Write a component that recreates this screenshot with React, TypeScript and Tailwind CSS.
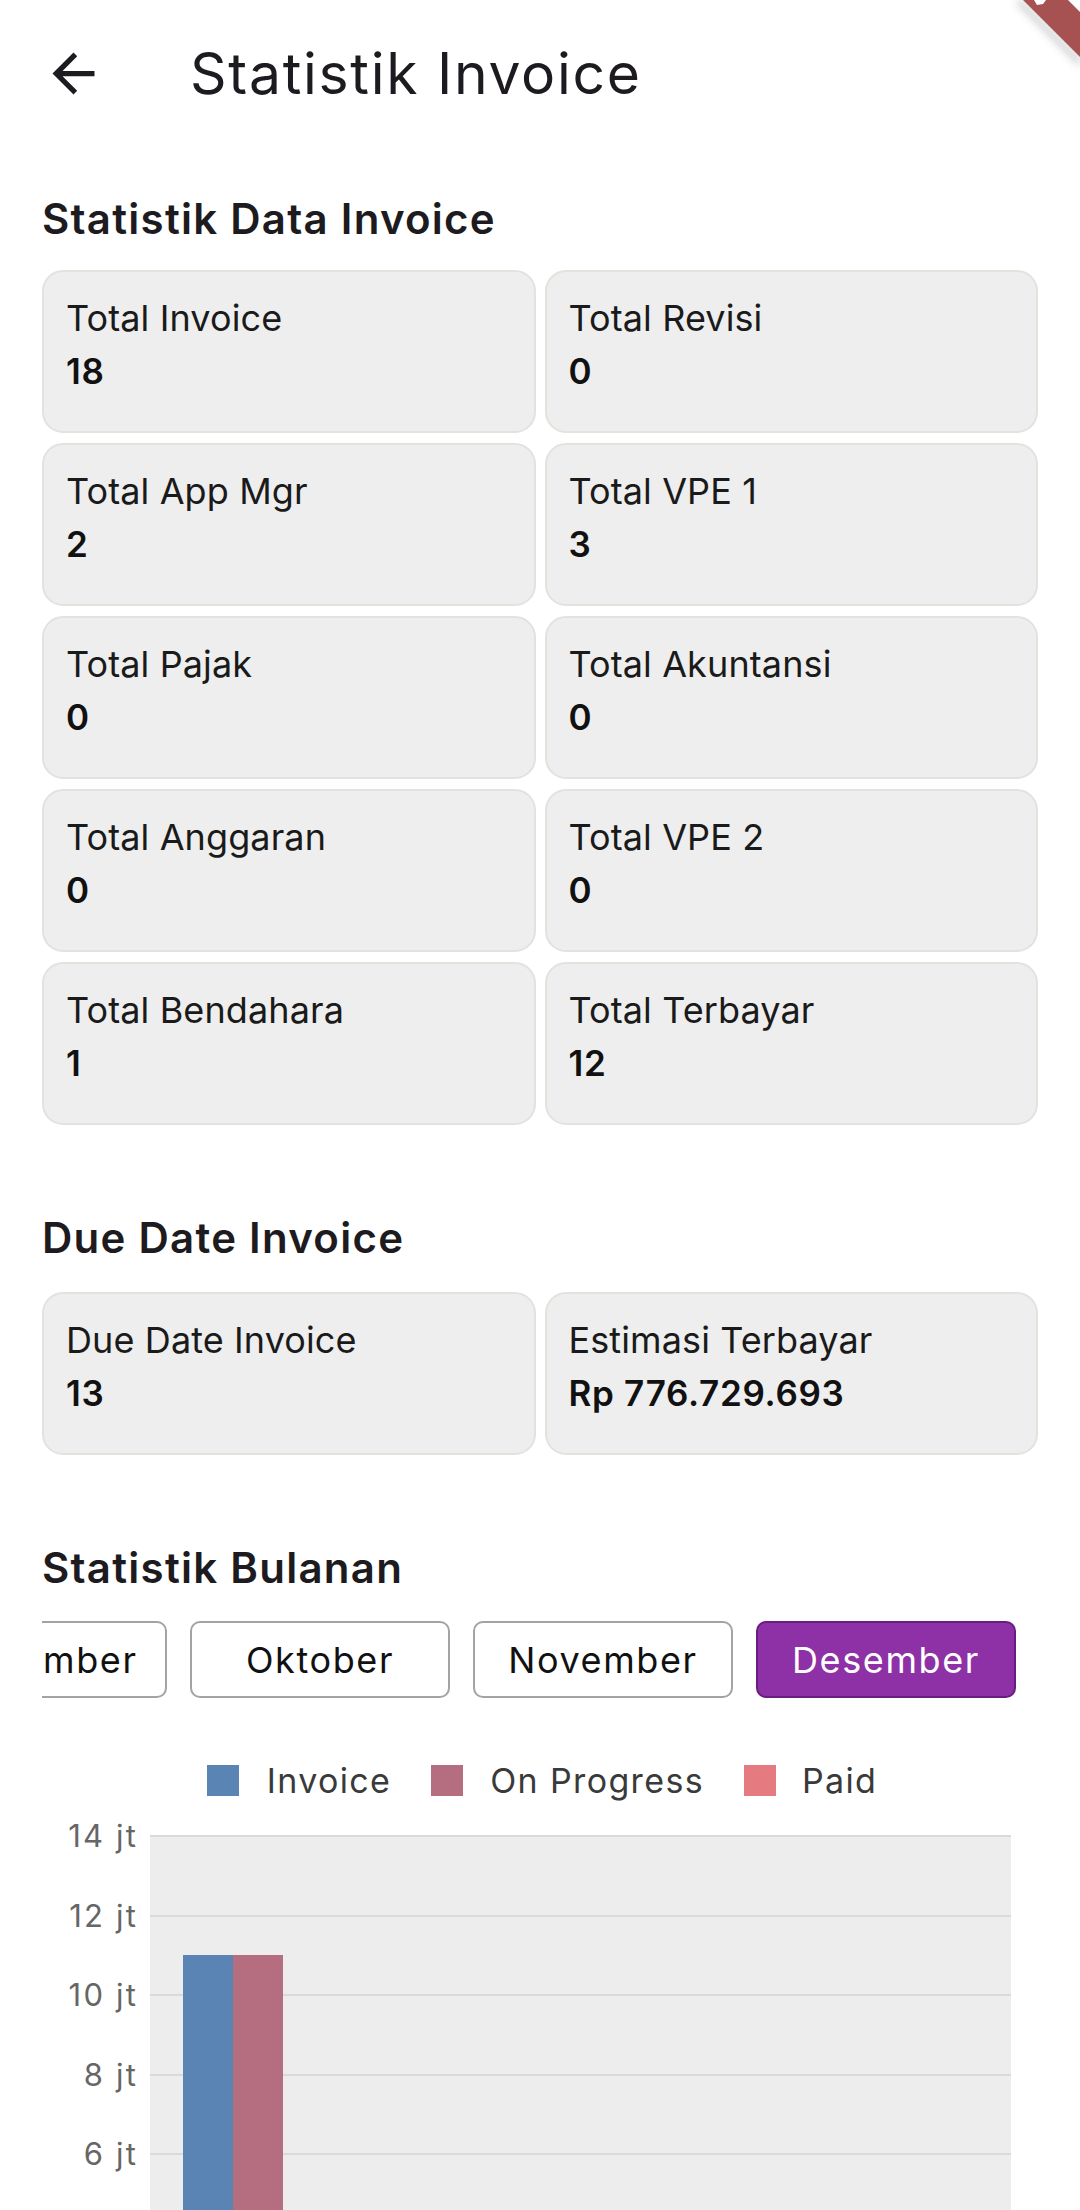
import React from "react";

const stats: [string, string][] = [
  ["Total Invoice", "18"],
  ["Total Revisi", "0"],
  ["Total App Mgr", "2"],
  ["Total VPE 1", "3"],
  ["Total Pajak", "0"],
  ["Total Akuntansi", "0"],
  ["Total Anggaran", "0"],
  ["Total VPE 2", "0"],
  ["Total Bendahara", "1"],
  ["Total Terbayar", "12"],
];

const months = ["September", "Oktober", "November", "Desember"];

function Card({ label, value }: { label: string; value: string }) {
  return (
    <div className="h-[163px] rounded-[21px] border-2 border-[#dfe4dd] bg-[#eeeeee] pl-[22px] pt-[24px]">
      <div className="text-[36px] leading-[44px] tracking-[0.003em] text-[#1a1a1a]">{label}</div>
      <div className="mt-[9px] text-[35px] font-semibold leading-[44px] tracking-[0.02em] text-[#111111]">{value}</div>
    </div>
  );
}

function Heading({ children, className = "" }: { children: React.ReactNode; className?: string }) {
  return (
    <div className={"text-[42px] font-semibold leading-[50px] tracking-[0.03em] text-[#1d1b20] " + className}>
      {children}
    </div>
  );
}

const ticks = ["14 jt", "12 jt", "10 jt", "8 jt", "6 jt"];

export default function App() {
  return (
    <div className="relative h-[2210px] w-[1080px] overflow-hidden bg-white font-['Inter',sans-serif]">
      {/* Debug banner */}
      <svg className="absolute right-0 top-0" width="80" height="80" viewBox="0 0 80 80">
        <defs>
          <filter id="sh" x="-50%" y="-50%" width="200%" height="200%">
            <feGaussianBlur stdDeviation="4" />
          </filter>
        </defs>
        <polygon points="21,0 80,59 80,66 16,2" fill="rgba(0,0,0,0.25)" filter="url(#sh)" />
        <polygon points="23,0 68,0 80,12 80,57" fill="#a65252" />
        <polygon points="34,0 46,0 43,4 37,5" fill="#ffffff" />
      </svg>

      {/* App bar */}
      <div className="flex h-[147px] items-center">
        <div className="flex h-[147px] w-[147px] items-center justify-center">
          <svg width="63" height="63" viewBox="0 0 24 24">
            <path d="M20 11H7.83l5.59-5.59L12 4l-8 8 8 8 1.41-1.41L7.83 13H20v-2z" fill="#1d1b20" />
          </svg>
        </div>
        <div className="pl-[43px] text-[57px] font-normal leading-[70px] tracking-[0.03em] text-[#1d1b20]">
          Statistik Invoice
        </div>
      </div>

      <div className="px-[42px]">
        <Heading className="mt-[47px]">Statistik Data Invoice</Heading>
        <div className="mt-[26px] grid grid-cols-2 gap-x-[9px] gap-y-[10px]">
          {stats.map(([l, v]) => (
            <Card key={l} label={l} value={v} />
          ))}
        </div>

        <Heading className="mt-[88px]">Due Date Invoice</Heading>
        <div className="mt-[29px] grid grid-cols-2 gap-x-[9px]">
          <Card label="Due Date Invoice" value="13" />
          <Card label="Estimasi Terbayar" value="Rp 776.729.693" />
        </div>

        <Heading className="mt-[88px]">Statistik Bulanan</Heading>
        <div className="mt-[28px] overflow-hidden">
          <div className="flex justify-end gap-[23px] pr-[22px]">
            {months.map((m) => {
              const active = m === "Desember";
              return (
                <div
                  key={m}
                  className={
                    "flex h-[77px] w-[260px] shrink-0 items-center justify-center rounded-[10px] border-2 text-[36px] tracking-[0.045em] " +
                    (active
                      ? "border-[#6a1d7e] bg-[#8e30a6] text-white"
                      : "border-[#a3a3a3] bg-white text-[#111111]")
                  }
                >
                  {m}
                </div>
              );
            })}
          </div>
        </div>

        {/* Legend */}
        <div className="mt-[60px] flex h-[44px] items-center justify-center text-[34px] tracking-[0.04em] text-[#3a3a3a]">
          <div className="ml-[4px] h-[31px] w-[32px] bg-[#5a84b3]" />
          <span className="ml-[28px]">Invoice</span>
          <div className="ml-[40px] h-[31px] w-[32px] bg-[#b56d80]" />
          <span className="ml-[27px]">On Progress</span>
          <div className="ml-[40px] h-[31px] w-[32px] bg-[#e57a80]" />
          <span className="ml-[26px]">Paid</span>
        </div>

        {/* Chart */}
        <div className="relative mt-[34px] h-[500px]">
          <div className="absolute bottom-0 left-[108px] right-[27px] top-0 bg-[#ededed]">
            {[0, 1, 2, 3, 4, 5].map((i) => (
              <div
                key={i}
                className="absolute left-0 right-0 h-[2px] bg-[#dadada]"
                style={{ top: i * 79.5 - 1 }}
              />
            ))}
            <div className="absolute bottom-0 left-[33px] top-[119px] w-[50px] bg-[#5a84b3]" />
            <div className="absolute bottom-0 left-[83px] top-[119px] w-[50px] bg-[#b56d80]" />
          </div>
          {ticks.map((t, i) => (
            <div
              key={t}
              className="absolute left-0 w-[96px] text-right text-[31px] leading-[36px] tracking-[0.07em] text-[#666666]"
              style={{ top: i * 79.5 - 18 }}
            >
              {t}
            </div>
          ))}
        </div>
      </div>
    </div>
  );
}
